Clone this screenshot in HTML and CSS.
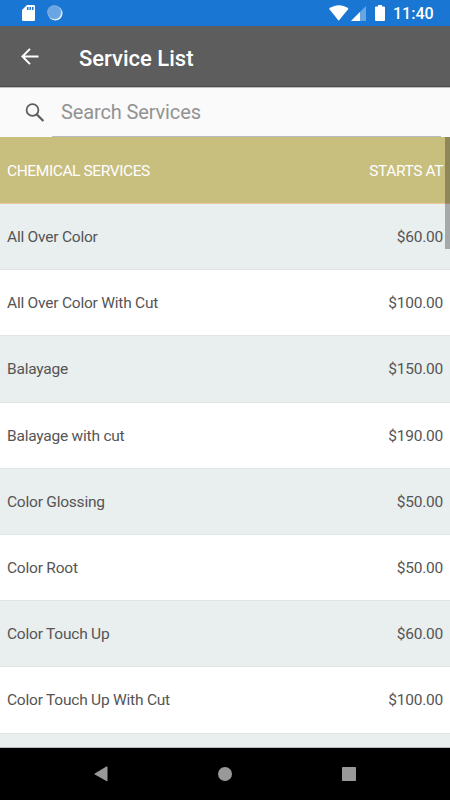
FILE: index.html
```html
<!DOCTYPE html>
<html lang="en">
<head>
<meta charset="utf-8">
<title>Service List</title>
<link rel="stylesheet" href="styles.css">
</head>
<body>
<div class="screen">
  <div class="status">
    <svg class="sd" width="13" height="16" viewBox="0 0 13 16"><path fill="#fff" d="M5 0h6.700Q13 0 13 1.300v13.400Q13 16 11.700 16H1.300Q0 16 0 14.700V5z"/><path fill="#1976d2" d="M5 2h1.500v3H5zM7.500 2H9v3H7.500zM10 2h1.500v3H10z"/></svg>
    <svg class="spinner" width="16" height="16" viewBox="0 0 16 16"><circle cx="8.300" cy="8.300" r="7.200" fill="#e8f2fb"/><circle cx="7.300" cy="7.300" r="7" fill="#69a5e2"/><circle cx="7.300" cy="7.300" r="6.500" fill="none" stroke="#94bfeb" stroke-dasharray="1 1"/></svg>
    <svg class="wifi" width="20" height="16" viewBox="0 0 20 16"><path fill="#fff" d="M0 3.800C5.500-.9 14.500-.9 19.500 3.800L9.700 15.700z"/></svg>
    <svg class="signal" width="15" height="15" viewBox="0 0 15 15"><path fill="#69a5e2" d="M15 0v15H0z"/><path fill="#fff" d="M9 6v9H0z"/></svg>
    <svg class="battery" width="10" height="16" viewBox="0 0 10 16"><path fill="#fff" d="M3 0h4v1.500h2q1 0 1 1V15q0 1-1 1H1q-1 0-1-1V2.500q0-1 1-1h2z"/></svg>
    <span class="clock">11:40</span>
  </div>
  <header class="appbar">
    <svg width="18" height="17" viewBox="0 0 18 17"><path d="M17.500 8.500H1.500M9 .9L1.400 8.500 9 16.100" fill="none" stroke="#fff" stroke-width="2"/></svg>
    <h1>Service List</h1>
  </header>
  <div class="search">
    <svg width="20" height="20" viewBox="0 0 20 20"><circle cx="7.500" cy="7" r="5.900" fill="none" stroke="#5d5d5d" stroke-width="1.800"/><path d="M11.600 11.300L18.400 18" stroke="#5d5d5d" stroke-width="2.300"/></svg>
    <div class="field">Search Services</div>
  </div>
  <main class="list">
    <div class="row heading"><span>CHEMICAL SERVICES</span><span>STARTS AT</span></div>
    <div class="row"><span>All Over Color</span><span>$60.00</span></div>
    <div class="row"><span>All Over Color With Cut</span><span>$100.00</span></div>
    <div class="row"><span>Balayage</span><span>$150.00</span></div>
    <div class="row"><span>Balayage with cut</span><span>$190.00</span></div>
    <div class="row"><span>Color Glossing</span><span>$50.00</span></div>
    <div class="row"><span>Color Root</span><span>$50.00</span></div>
    <div class="row"><span>Color Touch Up</span><span>$60.00</span></div>
    <div class="row"><span>Color Touch Up With Cut</span><span>$100.00</span></div>
    <div class="row"></div>
    <div class="scrollbar"></div>
  </main>
  <nav class="navbar">
    <svg width="14" height="16" viewBox="0 0 14 16"><path fill="#999" d="M12.400.6Q13.500 0 13.500 1v13.500q0 1-1.100.4L.8 8.500Q0 8 .8 7.400z"/></svg>
    <svg width="15" height="15" viewBox="0 0 15 15"><circle cx="7" cy="7" r="7" fill="#999"/></svg>
    <svg width="14" height="14" viewBox="0 0 14 14"><rect width="14" height="14" rx=".8" fill="#999"/></svg>
  </nav>
</div>
</body>
</html>
```
FILE: styles.css
```css
* { box-sizing: border-box; }
body { margin: 0; font-family: Roboto, sans-serif; }
svg { display: block; flex: none; }
.screen { width: 450px; height: 800px; display: flex; flex-direction: column; overflow: hidden; }
.status { height: 26px; flex: none; display: flex; align-items: center; background: #1976d2; color: #fff; padding: 0 18px 0 22px; }
.spinner { margin-left: 12px; }
.wifi { margin-left: auto; }
.signal { margin-left: 2px; margin-top: 1px; }
.battery { margin-left: 9px; }
.clock { width: 39px; margin: 2px 0 0 8px; font-size: 16px; font-weight: 500; line-height: 24px; white-space: nowrap; }
.appbar { height: 61px; flex: none; display: flex; align-items: center; gap: 40px; padding-left: 21px; background: #5d5d5d; border-bottom: 1px solid #4c4c4c; color: #fff; }
.appbar h1 { margin: 5px 0 0; font-size: 22px; font-weight: 500; line-height: 30px; }
.search { height: 50px; flex: none; display: flex; align-items: flex-start; gap: 7px; padding: 0 9px 0 25px; background: #fafafa; border-top: 1px solid #bdbdbd; }
.search svg { margin-top: 15px; }
.field { flex: 1; height: 49px; padding-left: 9px; line-height: 49px; font-size: 20px; letter-spacing: -.13px; color: #929292; border-bottom: 1px solid #b9bdbf; }
.list { position: relative; flex: 1; min-height: 0; overflow: hidden; border-bottom: 1px solid #b8bcbc; }
.row { height: 66.2px; display: flex; justify-content: space-between; align-items: center; padding: 1px 7px 0; font-size: 15.5px; letter-spacing: -.22px; color: #555; background: #fff; border-bottom: 1px solid #dfe5e5; }
.row:nth-child(even) { background: #e9eeee; }
.row.heading { height: 67px; background: #c8be7e; color: #fff; border-color: #ebc6a0; letter-spacing: -.4px; }
.scrollbar { position: absolute; top: 0; right: 0; width: 5px; height: 112px; background: rgba(0, 0, 0, .29); }
.navbar { height: 52px; flex: none; display: flex; align-items: center; justify-content: space-between; padding: 0 94px; background: #000; }
```
